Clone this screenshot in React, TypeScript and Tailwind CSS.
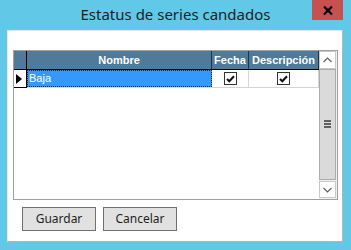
import React from 'react';

// Casilla marcada (estilo WinForms)
function CheckCell({ w }: { w: string }) {
  return (
    <div className={`${w} h-full flex items-center justify-center border-r border-[#d4d4d4]`}>
      <div className="w-[13px] h-[13px] border border-[#333] bg-white flex items-center justify-center">
        <svg width="9" height="8" viewBox="0 0 9 8">
          <path d="M1 4 L3.3 6.3 L8 1.2" fill="none" stroke="#111" strokeWidth="2" />
        </svg>
      </div>
    </div>
  );
}

function Chevron({ up }: { up?: boolean }) {
  return (
    <svg width="9" height="6" viewBox="0 0 9 6">
      <path d={up ? 'M0.5 5 L4.5 1 L8.5 5' : 'M0.5 1 L4.5 5 L8.5 1'} fill="none" stroke="#606060" strokeWidth="1.2" />
    </svg>
  );
}

export default function App() {
  return (
    <div className="w-[351px] h-[250px] bg-[#62c8e8] flex flex-col overflow-hidden" style={{ fontFamily: '"Liberation Sans", Arial, sans-serif' }}>
      {/* Barra de título */}
      <div className="h-[30px] relative flex items-center justify-center shrink-0">
        <span className="text-[15px] text-[#1e1e1e] -mt-[1px]" style={{ fontFamily: '"Noto Sans", "Open Sans", sans-serif' }}>
          Estatus de series candados
        </span>
        <div className="absolute top-0 right-[8px] w-[31px] h-[20px] bg-[#c75050] flex items-center justify-center">
          <svg width="10" height="9" viewBox="0 0 10 9">
            <path d="M1 0.5 L9 8.5 M9 0.5 L1 8.5" stroke="#000" strokeWidth="2.2" />
          </svg>
        </div>
      </div>

      {/* Área cliente */}
      <div className="ml-[7px] w-[336px] h-[212px] bg-white border border-[#e6e6e6] border-r-[#b4b4b4] border-b-[#b4b4b4] flex flex-col">
        {/* Grilla */}
        <div className="mt-[19px] ml-[5px] w-[325px] h-[150px] border border-[#a0a0a0] flex">
          <div className="flex-1 flex flex-col">
            {/* Encabezado */}
            <div className="h-[19px] flex bg-[#4f7a99] border-b border-black text-white text-[11px] font-bold">
              <div className="w-[13px] h-full border-r border-black" />
              <div className="w-[185px] h-full flex items-center justify-center border-r border-[#1f3446]">Nombre</div>
              <div className="w-[37px] h-full flex items-center justify-center border-r border-[#1f3446]">Fecha</div>
              <div className="w-[70px] h-full flex items-center justify-center border-r border-[#1f3446]">Descripción</div>
            </div>
            {/* Fila */}
            <div className="h-[18px] flex border-b border-[#d4d4d4]">
              <div className="w-[13px] h-[18px] border-r border-b border-black flex items-center pl-[2px] -mb-[1px]">
                <svg width="6" height="10" viewBox="0 0 6 10">
                  <path d="M0 0 L6 5 L0 10 Z" fill="#000" />
                </svg>
              </div>
              <div className="w-[185px] h-full bg-[#3399ff] border border-dotted border-[#222] flex items-center pl-[1px] text-[11px] text-white">
                Baja
              </div>
              <CheckCell w="w-[37px]" />
              <CheckCell w="w-[70px]" />
            </div>
          </div>
          {/* Barra de desplazamiento */}
          <div className="w-[18px] flex flex-col bg-[#f0f0f0] pr-[1px]">
            <div className="h-[18px] bg-white border border-[#c8c8c8] flex items-center justify-center">
              <Chevron up />
            </div>
            <div className="flex-1 bg-[#dadada] border border-[#ababab] flex items-center justify-center">
              <div className="w-[7px] flex flex-col gap-[1px] -mt-[2px]">
                <div className="h-[2px] bg-[#606060]" />
                <div className="h-[2px] bg-[#606060]" />
                <div className="h-[2px] bg-[#606060]" />
              </div>
            </div>
            <div className="h-[17px] mt-[1px] mb-[1px] bg-white border border-[#c8c8c8] flex items-center justify-center">
              <Chevron />
            </div>
          </div>
        </div>

        {/* Botones */}
        <div className="mt-[7px] ml-[14px] flex gap-[7px] text-[12px] text-[#1e1e1e]" style={{ fontFamily: '"Noto Sans", sans-serif' }}>
          <button className="w-[74px] h-[24px] bg-[#e1e1e1] border border-[#707070] flex items-center justify-center">Guardar</button>
          <button className="w-[74px] h-[24px] bg-[#e1e1e1] border border-[#707070] flex items-center justify-center">Cancelar</button>
        </div>
      </div>
    </div>
  );
}
